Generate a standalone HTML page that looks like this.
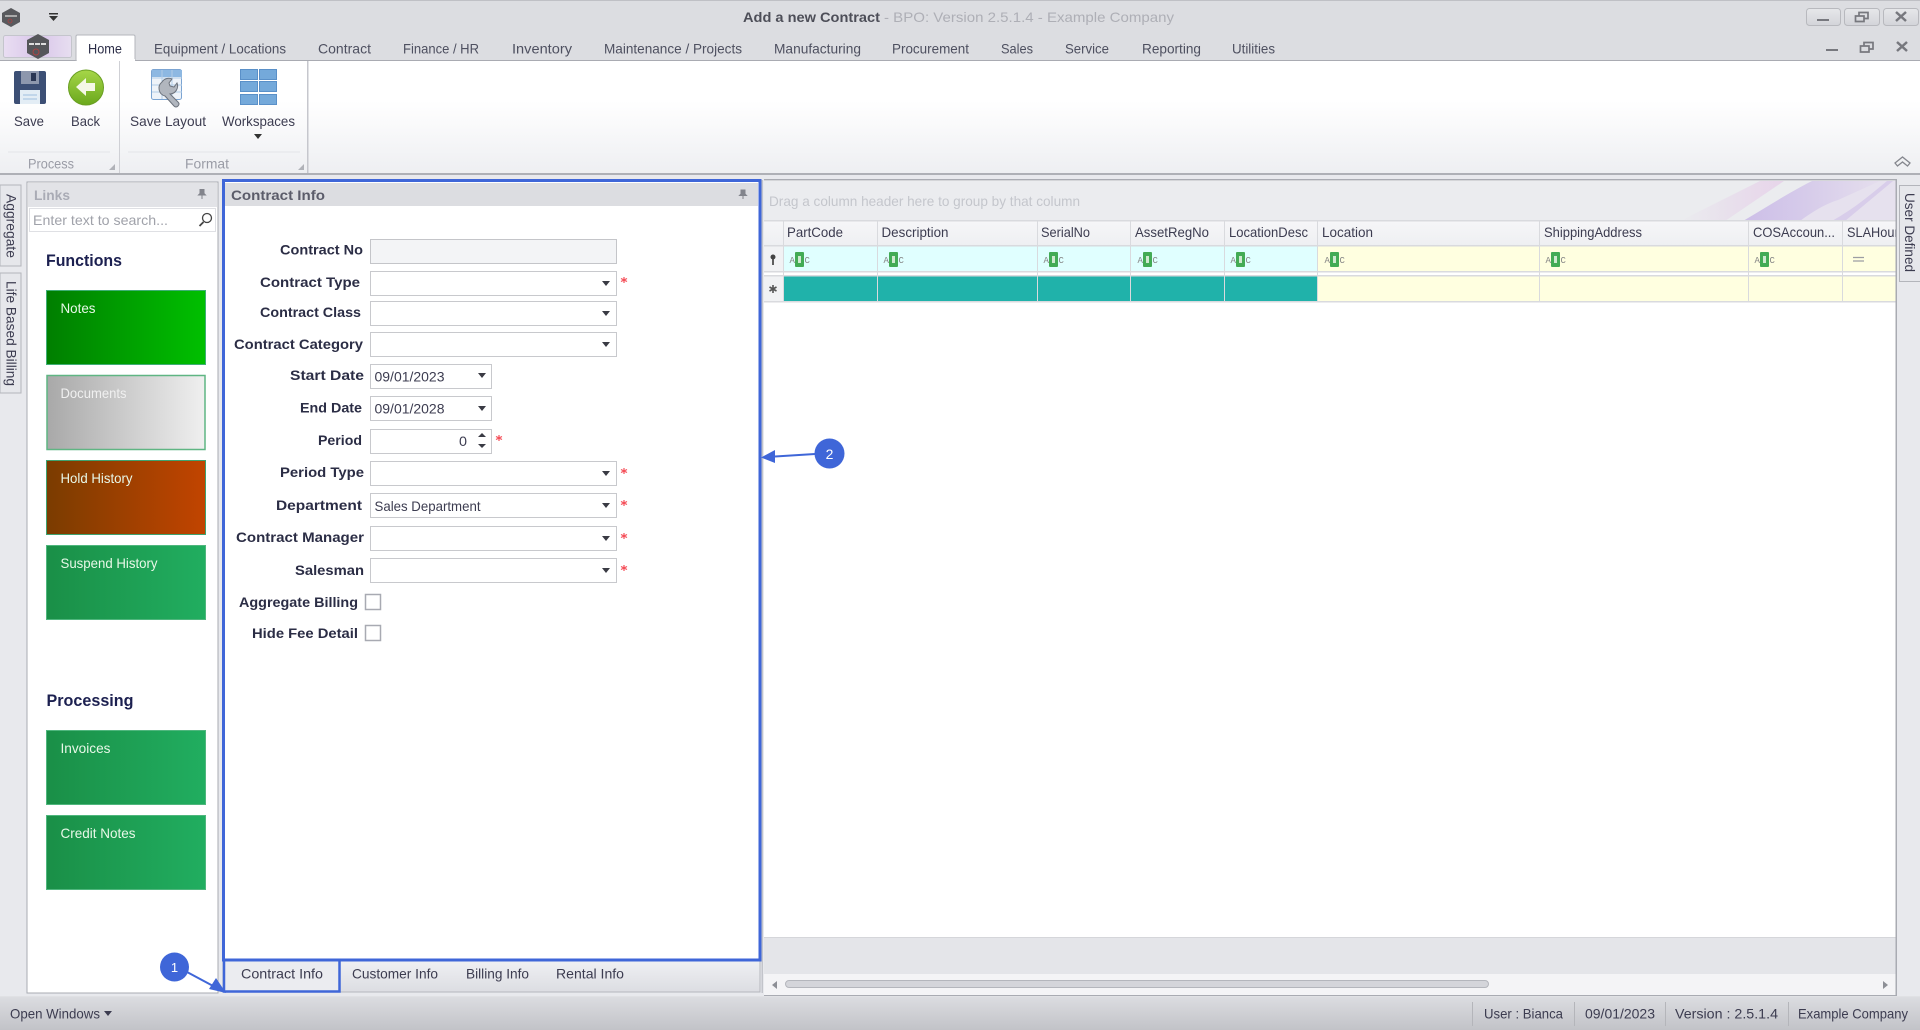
<!DOCTYPE html>
<html><head><meta charset="utf-8"><title>Add a new Contract</title>
<style>
html,body{margin:0;padding:0;width:1920px;height:1030px;overflow:hidden;background:#e8e9ed}
svg{display:block;filter:blur(.35px)}
text{font-family:"Liberation Sans",sans-serif;font-size:14px;fill:#3c3c50}
.b{font-weight:bold;fill:#2b2d45;font-size:14px}
.h{font-weight:bold;fill:#1c2050;font-size:17px}
.t{fill:#e8f8e8}
.g{fill:#9a9ca6}
.tab{fill:#4e5060}
.sm{font-size:9px;fill:#858585;font-family:"Liberation Mono",monospace}
</style></head><body>
<svg width="1920" height="1030" viewBox="0 0 1920 1030" xmlns="http://www.w3.org/2000/svg">
<defs>
<linearGradient id="rib" x1="0" y1="0" x2="0" y2="1"><stop offset="0" stop-color="#fff"/><stop offset=".35" stop-color="#fff"/><stop offset="1" stop-color="#eeeff2"/></linearGradient>
<linearGradient id="sb" x1="0" y1="0" x2="0" y2="1"><stop offset="0" stop-color="#dcdde1"/><stop offset="1" stop-color="#c2c3c8"/></linearGradient>
<linearGradient id="tb" x1="0" y1="0" x2="0" y2="1"><stop offset="0" stop-color="#eff0f3"/><stop offset="1" stop-color="#dcdde2"/></linearGradient>
<linearGradient id="n" gradientUnits="userSpaceOnUse" x1="46" y1="0" x2="206" y2="0"><stop offset="0" stop-color="#007e00"/><stop offset="1" stop-color="#00c000"/></linearGradient>
<linearGradient id="d" gradientUnits="userSpaceOnUse" x1="46" y1="0" x2="206" y2="0"><stop offset="0" stop-color="#a8a8a8"/><stop offset="1" stop-color="#f0f0f0"/></linearGradient>
<linearGradient id="o" gradientUnits="userSpaceOnUse" x1="46" y1="0" x2="206" y2="0"><stop offset="0" stop-color="#7a3c00"/><stop offset="1" stop-color="#c24400"/></linearGradient>
<linearGradient id="s" gradientUnits="userSpaceOnUse" x1="46" y1="0" x2="206" y2="0"><stop offset="0" stop-color="#1a8f47"/><stop offset="1" stop-color="#21ae60"/></linearGradient>
<linearGradient id="hd" x1="0" y1="0" x2="0" y2="1"><stop offset="0" stop-color="#f6f6f8"/><stop offset="1" stop-color="#eeeff2"/></linearGradient>
<linearGradient id="btn" x1="0" y1="0" x2="0" y2="1"><stop offset="0" stop-color="#e6e7ea"/><stop offset="1" stop-color="#d3d4d9"/></linearGradient>
<linearGradient id="gg" x1="0" y1="0" x2="0" y2="1"><stop offset="0" stop-color="#a6d648"/><stop offset="1" stop-color="#6aa81c"/></linearGradient>
<linearGradient id="ap" x1="0" y1="0" x2="1" y2="0"><stop offset="0" stop-color="#e9def2"/><stop offset=".5" stop-color="#d9c6ea"/><stop offset="1" stop-color="#e7def0"/></linearGradient>
<linearGradient id="pk" gradientUnits="userSpaceOnUse" x1="1680" y1="0" x2="1790" y2="0"><stop offset="0" stop-color="#ebecef"/><stop offset=".45" stop-color="#e8e0ec"/><stop offset="1" stop-color="#e7d3ea"/></linearGradient>
<linearGradient id="pu" gradientUnits="userSpaceOnUse" x1="1745" y1="0" x2="1896" y2="0"><stop offset="0" stop-color="#cdbfe8"/><stop offset=".4" stop-color="#d6cbea"/><stop offset="1" stop-color="#e8e2ee"/></linearGradient>
<clipPath id="gc"><rect x="764" y="181" width="1132" height="40"/></clipPath>
<clipPath id="sc"><rect x="1843" y="221" width="53" height="25"/></clipPath>
</defs>

<!-- background -->
<rect width="1920" height="1030" fill="#e8e9ed"/>
<!-- title + tab strip -->
<rect width="1920" height="61" fill="#dcdde1"/>
<rect width="1920" height="1" fill="#bfc0c5"/>
<rect y="60" width="1920" height="1.5" fill="#a9abb2"/>
<!-- quick access logo -->
<path d="M11 8l9 5v9l-9 5-9-5v-9z" fill="#58595d"/><rect x="5" y="15" width="12" height="2" fill="#aaa"/><circle cx="10" cy="21" r="2" fill="none" stroke="#a44" stroke-width=".8"/>
<path d="M49 13h9v1.5h-9zM49 16h9l-4.500 5z" fill="#333"/>
<text x="743" y="22" textLength="137" lengthAdjust="spacingAndGlyphs" style="font-weight:bold;fill:#4d4e58">Add a new Contract</text>
<text x="884" y="22" textLength="290" lengthAdjust="spacingAndGlyphs" style="fill:#aeafb6">- BPO: Version 2.5.1.4 - Example Company</text>
<!-- window buttons -->
<g fill="url(#btn)" stroke="#b8b9be"><rect x="1806.500" y="8.500" width="34" height="17" rx="3"/><rect x="1844.500" y="8.500" width="35" height="17" rx="3"/><rect x="1883.500" y="8.500" width="35" height="17" rx="3"/></g>
<g fill="none" stroke="#77787e" stroke-width="2">
<path d="M1817 20h12"/>
<path d="M1859 16v-3.500h9v6h-4M1855.500 16h8.500v5.500h-8.500z" stroke-width="1.700"/>
<path d="M1896 12l10 9M1906 12l-10 9" stroke-width="2.500"/>
<path d="M1826 50h12"/>
<path d="M1864 46v-3.500h9v6.500h-4M1860.500 46h8.500v6h-8.500z" stroke-width="1.700"/>
<path d="M1897 42l10 9M1907 42l-10 9" stroke-width="2.500"/></g>
<!-- app button -->
<rect x="3.500" y="35.500" width="68" height="22" rx="2" fill="url(#ap)" stroke="#c4c5cc"/>
<path d="M38 34l11 6v13l-11 6-11-6v-13z" fill="#55565a"/><g fill="#ddd"><rect x="29" y="43" width="5" height="2"/><rect x="35" y="43" width="5" height="2"/><rect x="41" y="43" width="5" height="2"/></g><circle cx="36" cy="52" r="3" fill="none" stroke="#a44"/>
<!-- ribbon tabs -->
<path d="M76 61V36.500q0-1.500 1.500-1.500h56q1.500 0 1.500 1.500V61z" fill="#fff" stroke="#b4b6bc"/>
<text x="88" y="53.500" textLength="34" lengthAdjust="spacingAndGlyphs" style="fill:#2c2e48">Home</text>
<g>
<text class="tab" x="154" y="53.500" textLength="132" lengthAdjust="spacingAndGlyphs">Equipment / Locations</text>
<text class="tab" x="318" y="53.500" textLength="53" lengthAdjust="spacingAndGlyphs">Contract</text>
<text class="tab" x="403" y="53.500" textLength="76" lengthAdjust="spacingAndGlyphs">Finance / HR</text>
<text class="tab" x="512" y="53.500" textLength="60" lengthAdjust="spacingAndGlyphs">Inventory</text>
<text class="tab" x="604" y="53.500" textLength="138" lengthAdjust="spacingAndGlyphs">Maintenance / Projects</text>
<text class="tab" x="774" y="53.500" textLength="87" lengthAdjust="spacingAndGlyphs">Manufacturing</text>
<text class="tab" x="892" y="53.500" textLength="77" lengthAdjust="spacingAndGlyphs">Procurement</text>
<text class="tab" x="1001" y="53.500" textLength="32" lengthAdjust="spacingAndGlyphs">Sales</text>
<text class="tab" x="1065" y="53.500" textLength="44" lengthAdjust="spacingAndGlyphs">Service</text>
<text class="tab" x="1142" y="53.500" textLength="59" lengthAdjust="spacingAndGlyphs">Reporting</text>
<text class="tab" x="1232" y="53.500" textLength="43" lengthAdjust="spacingAndGlyphs">Utilities</text>
</g>
<!-- ribbon -->
<rect y="61" width="1920" height="112" fill="url(#rib)"/>
<rect x="77" y="59" width="58" height="3" fill="#fff"/>
<rect y="173" width="1920" height="2" fill="#aeb0b6"/>
<rect x="119" y="61" width="1" height="112" fill="#cfd0d5"/><rect x="307" y="61" width="1.500" height="112" fill="#c6c7cd"/>
<path d="M8 152h102M128 152h172" stroke="#e3e4e8" stroke-width="1"/>
<!-- Save icon -->
<rect x="14" y="71" width="32" height="33" rx="2" fill="#3c4f75"/><rect x="21" y="71" width="18" height="13" fill="#8d97ad"/><rect x="31" y="73" width="5" height="8" fill="#2a3654"/><rect x="20" y="90" width="20" height="14" fill="#e3edf5"/><path d="M23 95h14M23 99h14" stroke="#9fc0de"/>
<text x="14" y="126" textLength="30" lengthAdjust="spacingAndGlyphs">Save</text>
<!-- Back icon -->
<circle cx="86" cy="87.500" r="17.500" fill="url(#gg)" stroke="#699f22"/><path d="M76 87l10-9v5h9v8h-9v5z" fill="#f4f8e6"/>
<text x="71" y="126" textLength="29" lengthAdjust="spacingAndGlyphs">Back</text>
<!-- Save Layout icon -->
<rect x="151.500" y="69.500" width="30" height="30" rx="2" fill="#eef3f9" stroke="#7ba4d2"/><rect x="152" y="70" width="30" height="7" fill="#8db8e2"/><path d="M162 70v29M172 70v29M152 78h30M152 85h30M152 92h30" stroke="#b3cde6"/>
<path d="M162 82a8 8 0 0 1 10-3l-3 4 1 3 4 1 3-4a8 8 0 0 1-7 11l8 8q2 2 0 4t-4 0l-9-10a8 8 0 0 1-3-14z" fill="#b1b6be" stroke="#6c727c" stroke-width="1"/>
<text x="130" y="126" textLength="76" lengthAdjust="spacingAndGlyphs">Save Layout</text>
<!-- Workspaces icon -->
<g fill="#74a9da" stroke="#5a90c8"><rect x="240.500" y="69.500" width="17" height="10"/><rect x="259.500" y="69.500" width="17" height="10"/><rect x="240.500" y="81.500" width="17" height="10"/><rect x="259.500" y="81.500" width="17" height="10"/><rect x="240.500" y="94.500" width="17" height="10"/><rect x="259.500" y="94.500" width="17" height="10"/></g>
<text x="222" y="126" textLength="73" lengthAdjust="spacingAndGlyphs">Workspaces</text>
<path d="M254 134h8l-4 5z" fill="#333"/>
<text class="g" x="28" y="168.500" textLength="46" lengthAdjust="spacingAndGlyphs">Process</text>
<text class="g" x="185" y="168.500" textLength="44" lengthAdjust="spacingAndGlyphs">Format</text>
<path d="M115 164v6h-6zM304 164v6h-6z" fill="#b0b2b8"/>
<path d="M1895 163l7.500-6 7.500 6-2.500 3-5-4-5 4z" fill="#f0f1f3" stroke="#85878e" stroke-width="1.300"/>

<!-- left vertical tabs -->
<path d="M0 185h21v81H0zM0 273h21v120H0z" fill="#e6e7eb" stroke="#b3b5bb"/>
<text transform="translate(6.500,194) rotate(90)" textLength="64" lengthAdjust="spacingAndGlyphs">Aggregate</text>
<text transform="translate(6.500,281) rotate(90)" textLength="105" lengthAdjust="spacingAndGlyphs">Life Based Billing</text>

<!-- Links panel -->
<rect x="27" y="182" width="191" height="811" fill="#fff" stroke="#a9abb2"/>
<rect x="28" y="183" width="189" height="24" fill="#e2e3e7"/>
<text x="34" y="200" textLength="36" lengthAdjust="spacingAndGlyphs" style="font-weight:bold;fill:#a9abb5">Links</text>
<path d="M200 189.500h4v4l1.500 1.500h-7l1.500-1.500zM202 195v4" fill="#82848c" stroke="#82848c"/>
<rect x="29.500" y="208.500" width="186" height="23" fill="#fff" stroke="#dfe0e4"/>
<text x="33" y="225" textLength="135" lengthAdjust="spacingAndGlyphs" style="fill:#a0a2aa">Enter text to search...</text>
<circle cx="207" cy="218" r="4.500" fill="none" stroke="#444" stroke-width="1.300"/><path d="M203.500 222l-4 4" stroke="#444" stroke-width="1.800"/>
<text class="h" x="46" y="266" textLength="76" lengthAdjust="spacingAndGlyphs">Functions</text>
<rect x="46.500" y="290.500" width="159" height="74" fill="url(#n)" stroke="#3fae75"/>
<rect x="47" y="375.500" width="158" height="74" fill="url(#d)" stroke="#5fb583" stroke-width="1.500"/>
<rect x="46.500" y="460.500" width="159" height="74" fill="url(#o)" stroke="#3fa26f"/>
<rect x="46.500" y="545.500" width="159" height="74" fill="url(#s)" stroke="#4fb67d"/>
<text class="t" x="60.500" y="313" textLength="35" lengthAdjust="spacingAndGlyphs">Notes</text>
<text class="t" x="60.500" y="398" textLength="66" lengthAdjust="spacingAndGlyphs" style="fill:#f0f0f0">Documents</text>
<text class="t" x="60.500" y="483" textLength="72" lengthAdjust="spacingAndGlyphs">Hold History</text>
<text class="t" x="60.500" y="568" textLength="97" lengthAdjust="spacingAndGlyphs">Suspend History</text>
<text class="h" x="46.500" y="706" textLength="87" lengthAdjust="spacingAndGlyphs">Processing</text>
<rect x="46.500" y="730.500" width="159" height="74" fill="url(#s)" stroke="#4fb67d"/>
<rect x="46.500" y="815.500" width="159" height="74" fill="url(#s)" stroke="#4fb67d"/>
<text class="t" x="60.500" y="753" textLength="50" lengthAdjust="spacingAndGlyphs">Invoices</text>
<text class="t" x="60.500" y="838" textLength="75" lengthAdjust="spacingAndGlyphs">Credit Notes</text>

<!-- Contract info panel -->
<rect x="223" y="181" width="537" height="779" fill="#fff"/>
<rect x="225" y="183" width="533" height="23" fill="#dcdde1"/>
<text x="231" y="200" textLength="94" lengthAdjust="spacingAndGlyphs" style="font-weight:bold;fill:#5b5c6a">Contract Info</text>
<path d="M741 190h4v4l1.500 1.500h-7l1.500-1.500zM743 195v4" fill="#82848c" stroke="#82848c"/>
<!-- tab strip -->
<rect x="223" y="961" width="537" height="31" fill="url(#tb)" stroke="#b5b7bd"/>
<rect x="225" y="962" width="114" height="29" fill="#ebecf0"/>
<text x="241" y="978.500" textLength="82" lengthAdjust="spacingAndGlyphs">Contract Info</text>
<text x="352" y="978.500" textLength="86" lengthAdjust="spacingAndGlyphs">Customer Info</text>
<text x="466" y="978.500" textLength="63" lengthAdjust="spacingAndGlyphs">Billing Info</text>
<text x="556" y="978.500" textLength="68" lengthAdjust="spacingAndGlyphs">Rental Info</text>
<!-- labels -->
<text class="b" x="280" y="254.500" textLength="83" lengthAdjust="spacingAndGlyphs">Contract No</text>
<text class="b" x="260" y="287" textLength="100" lengthAdjust="spacingAndGlyphs">Contract Type</text>
<text class="b" x="260" y="317" textLength="101" lengthAdjust="spacingAndGlyphs">Contract Class</text>
<text class="b" x="234" y="349" textLength="129" lengthAdjust="spacingAndGlyphs">Contract Category</text>
<text class="b" x="290" y="380" textLength="74" lengthAdjust="spacingAndGlyphs">Start Date</text>
<text class="b" x="300" y="412.500" textLength="62" lengthAdjust="spacingAndGlyphs">End Date</text>
<text class="b" x="318" y="445" textLength="44" lengthAdjust="spacingAndGlyphs">Period</text>
<text class="b" x="280" y="477" textLength="84" lengthAdjust="spacingAndGlyphs">Period Type</text>
<text class="b" x="276" y="510" textLength="86" lengthAdjust="spacingAndGlyphs">Department</text>
<text class="b" x="236" y="542" textLength="128" lengthAdjust="spacingAndGlyphs">Contract Manager</text>
<text class="b" x="295" y="575" textLength="69" lengthAdjust="spacingAndGlyphs">Salesman</text>
<text class="b" x="239" y="607" textLength="119" lengthAdjust="spacingAndGlyphs">Aggregate Billing</text>
<text class="b" x="252" y="638" textLength="106" lengthAdjust="spacingAndGlyphs">Hide Fee Detail</text>
<!-- inputs -->
<rect x="370.500" y="239.500" width="246" height="24" fill="#f3f4f6" stroke="#c4c5c9"/>
<g fill="#fff" stroke="#c8c9cd">
<rect x="370.500" y="271.500" width="246" height="24"/>
<rect x="370.500" y="301.500" width="246" height="24"/>
<rect x="370.500" y="332.500" width="246" height="24"/>
<rect x="370.500" y="364.500" width="121" height="24"/>
<rect x="370.500" y="396.500" width="121" height="24"/>
<rect x="370.500" y="429.500" width="121" height="24"/>
<rect x="370.500" y="461.500" width="246" height="24"/>
<rect x="370.500" y="493.500" width="246" height="24"/>
<rect x="370.500" y="526.500" width="246" height="24"/>
<rect x="370.500" y="558.500" width="246" height="24"/>
</g>
<g fill="#3a3b44">
<path d="M602 281h8l-4 5zM602 311h8l-4 5zM602 342h8l-4 5zM478 373h8l-4 5zM478 406h8l-4 5zM602 471h8l-4 5zM602 503h8l-4 5zM602 536h8l-4 5zM602 568h8l-4 5z"/>
<path d="M478 437l4-4 4 4zM478 444l4 4 4-4z"/>
</g>
<text x="374.500" y="381.500" textLength="70" lengthAdjust="spacingAndGlyphs">09/01/2023</text>
<text x="374.500" y="413.500" textLength="70" lengthAdjust="spacingAndGlyphs">09/01/2028</text>
<text x="459" y="446" textLength="8" lengthAdjust="spacingAndGlyphs">0</text>
<text x="374.500" y="511" textLength="106" lengthAdjust="spacingAndGlyphs">Sales Department</text>
<g stroke="#f5505a" stroke-width="1.200"><path d="M624 277v6M621 278.500l6 3M627 278.500l-6 3"/><path d="M499 435v6M496 436.500l6 3M502 436.500l-6 3"/><path d="M624 468v6M621 469.500l6 3M627 469.500l-6 3"/><path d="M624 500v6M621 501.500l6 3M627 501.500l-6 3"/><path d="M624 533v6M621 534.500l6 3M627 534.500l-6 3"/><path d="M624 565v6M621 566.500l6 3M627 566.500l-6 3"/></g>
<rect x="365.500" y="594.500" width="15" height="15" fill="#fff" stroke="#a8aab2" stroke-width="1.500"/>
<rect x="365.500" y="625.500" width="15" height="15" fill="#fff" stroke="#a8aab2" stroke-width="1.500"/>

<!-- blue highlight -->
<rect x="223.500" y="180.500" width="536.500" height="779.500" fill="none" stroke="#3f66d8" stroke-width="3"/>
<rect x="224" y="960" width="115.500" height="31.500" fill="none" stroke="#3f66d8" stroke-width="2.500"/>
<rect x="761.500" y="180" width="1.500" height="813" fill="#c2c4ca"/>

<!-- grid -->
<rect x="764" y="180" width="1132" height="815" fill="#fff"/>
<rect x="764" y="181" width="1132" height="40" fill="#ebecef"/>
<g clip-path="url(#gc)">
<path d="M1680 221L1760 181H1784L1725 221z" fill="url(#pk)"/>
<path d="M1743 221C1765 208 1790 192 1812 181H1896V221z" fill="url(#pu)"/>
<path d="M1800 221C1812 212 1825 204 1838 200L1880 181H1896V221z" fill="#e6e1ee"/>
<path d="M1832 221C1855 208 1870 195 1887 181H1893L1845 221z" fill="#d8cdea"/>
</g>
<text x="769" y="206" textLength="311" lengthAdjust="spacingAndGlyphs" style="fill:#c4c6cc">Drag a column header here to group by that column</text>
<rect x="764" y="221" width="1132" height="25" fill="url(#hd)"/>
<rect x="783" y="246" width="534" height="26" fill="#e0ffff"/>
<rect x="1318" y="246" width="578" height="26" fill="#ffffe0"/>
<rect x="764" y="246" width="19" height="26" fill="#f1f2f4"/>
<rect x="764" y="276" width="19" height="26" fill="#f1f2f4"/>
<rect x="783" y="276" width="534" height="26" fill="#20b2aa"/>
<rect x="1318" y="276" width="578" height="26" fill="#ffffe0"/>
<g fill="#d9dade"><rect x="764" y="220" width="1132" height="1.500"/><rect x="764" y="245" width="1132" height="1.500"/><rect x="764" y="271" width="1132" height="1.500"/><rect x="764" y="275" width="1132" height="1.500"/><rect x="764" y="301" width="1132" height="1.500"/>
<rect x="783" y="221" width="1" height="81"/><rect x="877" y="221" width="1" height="81"/><rect x="1037" y="221" width="1" height="81"/><rect x="1130" y="221" width="1" height="81"/><rect x="1224" y="221" width="1" height="81"/><rect x="1317" y="221" width="1" height="81"/><rect x="1539" y="221" width="1" height="81"/><rect x="1748" y="221" width="1" height="81"/><rect x="1842" y="221" width="1" height="81"/></g>
<text x="787" y="237" textLength="56" lengthAdjust="spacingAndGlyphs">PartCode</text>
<text x="881.500" y="237" textLength="67" lengthAdjust="spacingAndGlyphs">Description</text>
<text x="1041" y="237" textLength="49" lengthAdjust="spacingAndGlyphs">SerialNo</text>
<text x="1135" y="237" textLength="74" lengthAdjust="spacingAndGlyphs">AssetRegNo</text>
<text x="1229" y="237" textLength="79" lengthAdjust="spacingAndGlyphs">LocationDesc</text>
<text x="1322" y="237" textLength="51" lengthAdjust="spacingAndGlyphs">Location</text>
<text x="1544" y="237" textLength="98" lengthAdjust="spacingAndGlyphs">ShippingAddress</text>
<text x="1753" y="237" textLength="82" lengthAdjust="spacingAndGlyphs">COSAccoun...</text>
<text x="1847" y="237" clip-path="url(#sc)" textLength="58" lengthAdjust="spacingAndGlyphs">SLAHours</text>
<!-- key / asterisk -->
<circle cx="773" cy="257" r="2.500" fill="#444"/><path d="M773 259v6" stroke="#444" stroke-width="1.700"/>
<path d="M773 285v8M769.500 287l7 4M776.500 287l-7 4" stroke="#555" stroke-width="1.600"/>
<!-- ABC icons -->
<g><rect x="795" y="252" width="9" height="15" rx="1" fill="#43ab55"/><rect x="798" y="256" width="3" height="7" fill="#cfe9d0"/><text class="sm" x="789.500" y="263">A</text><text class="sm" x="804.500" y="263">C</text></g>
<g><rect x="889" y="252" width="9" height="15" rx="1" fill="#43ab55"/><rect x="892" y="256" width="3" height="7" fill="#cfe9d0"/><text class="sm" x="883.500" y="263">A</text><text class="sm" x="898.500" y="263">C</text></g>
<g><rect x="1049" y="252" width="9" height="15" rx="1" fill="#43ab55"/><rect x="1052" y="256" width="3" height="7" fill="#cfe9d0"/><text class="sm" x="1043.500" y="263">A</text><text class="sm" x="1058.500" y="263">C</text></g>
<g><rect x="1143" y="252" width="9" height="15" rx="1" fill="#43ab55"/><rect x="1146" y="256" width="3" height="7" fill="#cfe9d0"/><text class="sm" x="1137.500" y="263">A</text><text class="sm" x="1152.500" y="263">C</text></g>
<g><rect x="1236" y="252" width="9" height="15" rx="1" fill="#43ab55"/><rect x="1239" y="256" width="3" height="7" fill="#cfe9d0"/><text class="sm" x="1230.500" y="263">A</text><text class="sm" x="1245.500" y="263">C</text></g>
<g><rect x="1330" y="252" width="9" height="15" rx="1" fill="#43ab55"/><rect x="1333" y="256" width="3" height="7" fill="#cfe9d0"/><text class="sm" x="1324.500" y="263">A</text><text class="sm" x="1339.500" y="263">C</text></g>
<g><rect x="1551" y="252" width="9" height="15" rx="1" fill="#43ab55"/><rect x="1554" y="256" width="3" height="7" fill="#cfe9d0"/><text class="sm" x="1545.500" y="263">A</text><text class="sm" x="1560.500" y="263">C</text></g>
<g><rect x="1760" y="252" width="9" height="15" rx="1" fill="#43ab55"/><rect x="1763" y="256" width="3" height="7" fill="#cfe9d0"/><text class="sm" x="1754.500" y="263">A</text><text class="sm" x="1769.500" y="263">C</text></g>
<path d="M1853 257.500h11M1853 261h11" stroke="#9c9da3" stroke-width="1.300"/>
<!-- grid footer -->
<rect x="764" y="937" width="1132" height="37" fill="#e4e5e9"/>
<rect x="764" y="937" width="1132" height="1" fill="#d5d6da"/>
<rect x="764" y="974" width="1132" height="21" fill="#f4f4f6"/>
<rect x="785.500" y="980.500" width="703" height="7" rx="3.500" fill="#d4d5da" stroke="#b4b6bc"/>
<path d="M777 981l-5 4 5 4zM1883 981l5 4-5 4z" fill="#8d8f96"/>
<rect x="1895.500" y="179" width="1.500" height="817" fill="#a9abb2"/>
<rect x="764" y="179" width="1132" height="1.500" fill="#a9abb2"/>
<rect x="764" y="995" width="1133" height="1" fill="#a9abb2"/>
<!-- right tab -->
<rect x="1899.500" y="185.500" width="22" height="96" fill="#e6e7eb" stroke="#b3b5bb"/>
<text transform="translate(1905,193) rotate(90)" textLength="79" lengthAdjust="spacingAndGlyphs">User Defined</text>

<!-- status bar -->
<rect y="996" width="1920" height="34" fill="url(#sb)"/>
<rect y="996" width="1920" height="1" fill="#e0e1e4"/>
<text x="10" y="1018.500" textLength="90" lengthAdjust="spacingAndGlyphs">Open Windows</text>
<path d="M104 1011h8l-4 5z" fill="#3c3c50"/>
<g fill="#b4b5ba"><rect x="1472" y="1002" width="1" height="24"/><rect x="1574" y="1002" width="1" height="24"/><rect x="1665" y="1002" width="1" height="24"/><rect x="1788" y="1002" width="1" height="24"/></g>
<text x="1484" y="1018.500" textLength="79" lengthAdjust="spacingAndGlyphs">User : Bianca</text>
<text x="1585" y="1018.500" textLength="70" lengthAdjust="spacingAndGlyphs">09/01/2023</text>
<text x="1675" y="1018.500" textLength="103" lengthAdjust="spacingAndGlyphs">Version : 2.5.1.4</text>
<text x="1798" y="1018.500" textLength="110" lengthAdjust="spacingAndGlyphs">Example Company</text>

<!-- callouts -->
<path d="M187 972L215 987" stroke="#3f66d8" stroke-width="2" fill="none"/>
<path d="M226 993L209 989L216 978z" fill="#3f66d8"/>
<circle cx="174.500" cy="967" r="14.500" fill="#3f66d8"/>
<text x="174.500" y="972" text-anchor="middle" style="fill:#fff;font-size:13px">1</text>
<path d="M815 454L775 456.500" stroke="#3f66d8" stroke-width="2" fill="none"/>
<path d="M761 457.500L775 450V463z" fill="#3f66d8"/>
<circle cx="829.500" cy="453.500" r="15" fill="#3f66d8"/>
<text x="829.500" y="459" text-anchor="middle" style="fill:#fff;font-size:14px">2</text>
</svg>
</body></html>
